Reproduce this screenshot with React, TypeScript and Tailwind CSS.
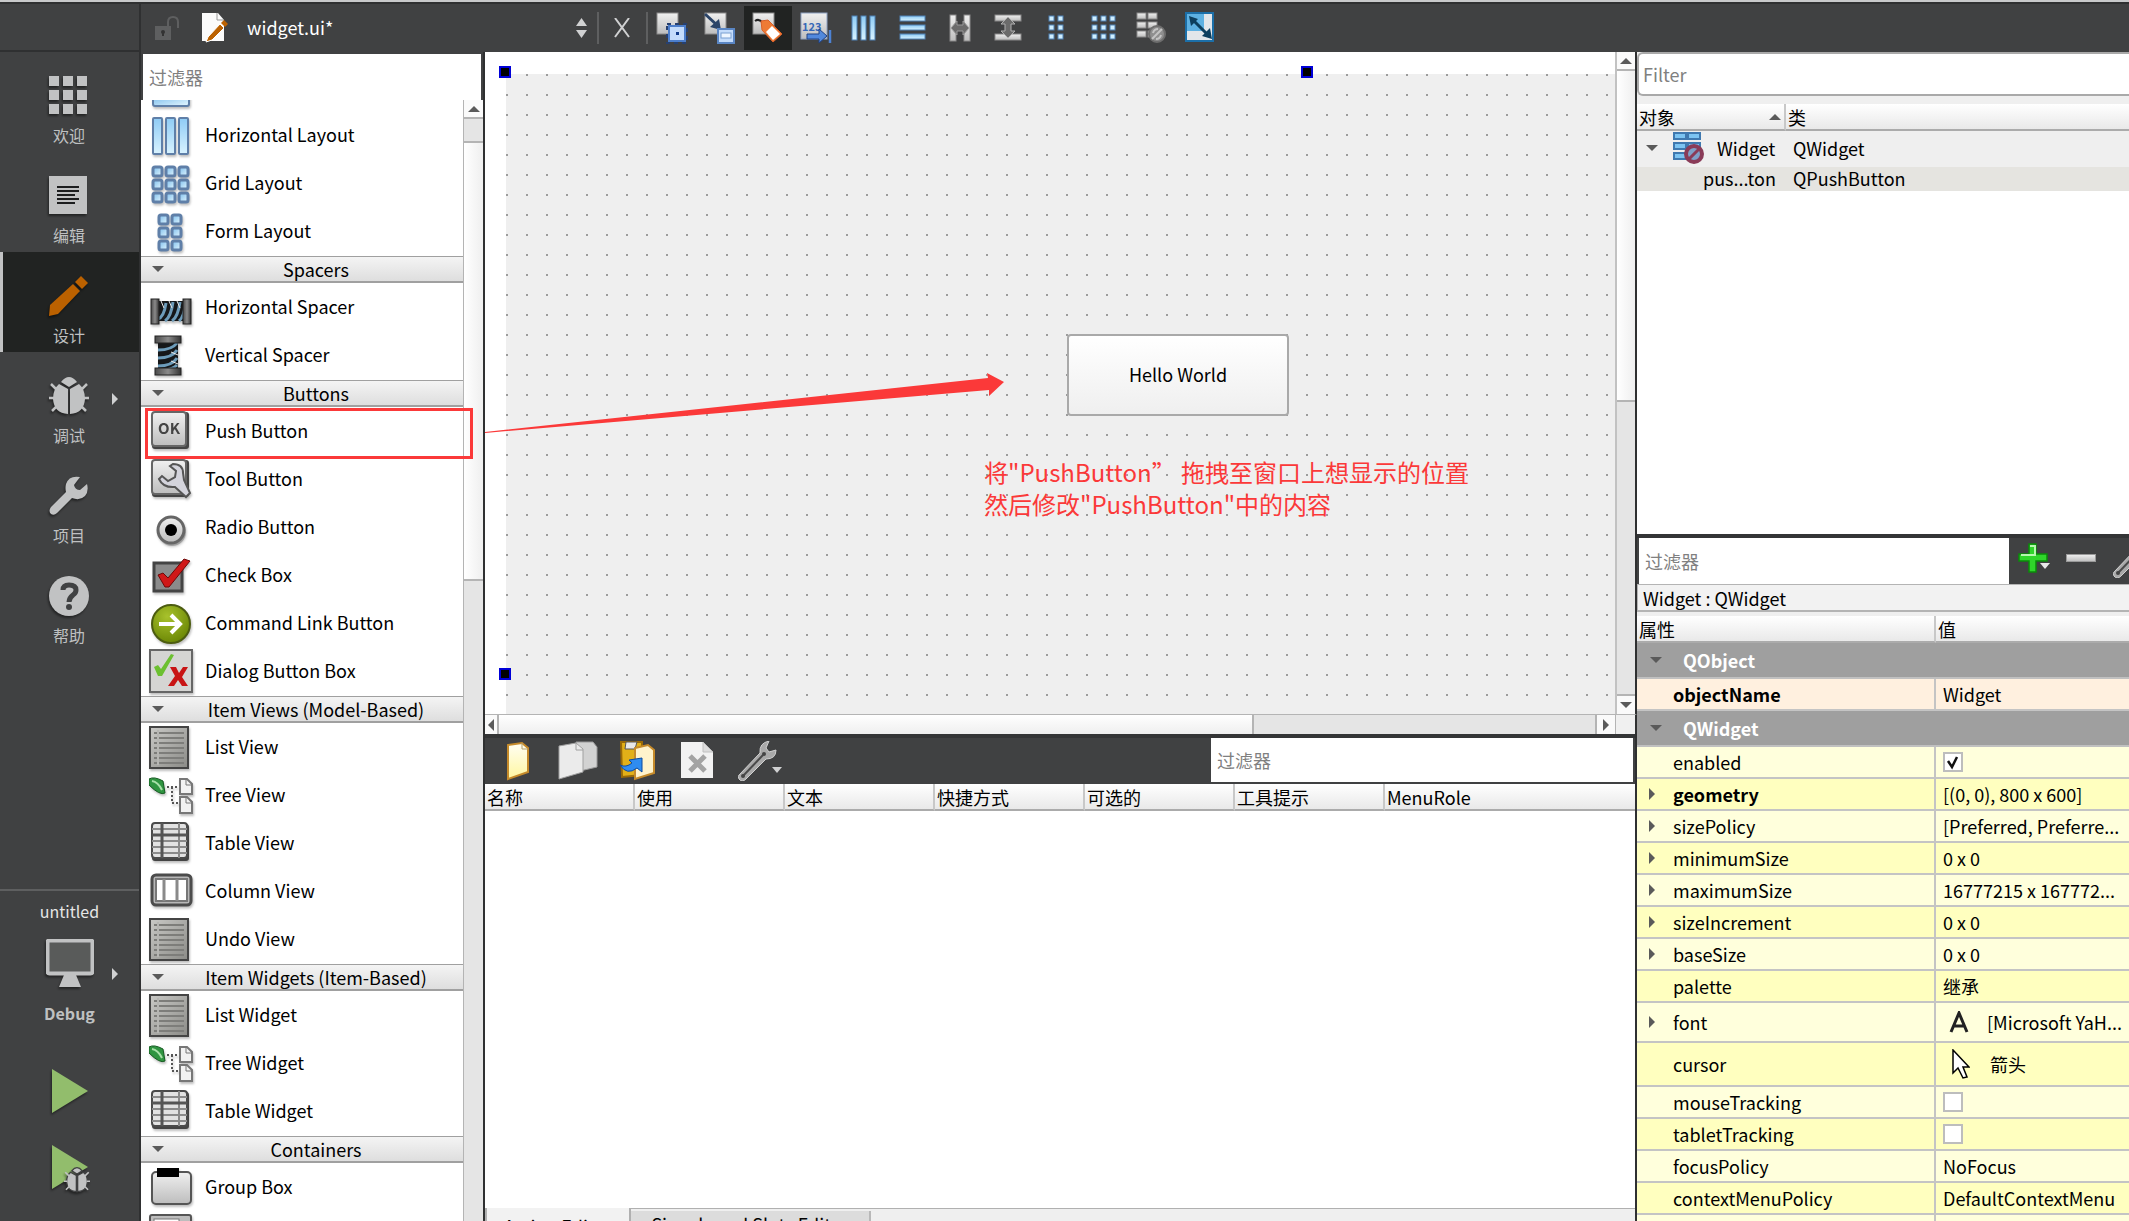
import { ReactNode } from "react";
import clsx from "clsx";

/* ---------- mode bar icons ---------- */

const shadow = "drop-shadow-[-1px_2px_1px_rgba(0,0,0,0.45)]";

const WelcomeIcon = () => (
    <svg width="38" height="38" viewBox="0 0 38 38" className={shadow}>
        {[0, 14, 28].map((y) => [0, 14, 28].map((x) => <rect key={`${x}-${y}`} x={x} y={y} width="10" height="10" fill="#c1c2c3" />))}
    </svg>
);

const EditIcon = () => (
    <svg width="38" height="38" viewBox="0 0 38 38" className={shadow}>
        <rect width="38" height="38" fill="#c1c2c3" />
        <path d="M8 11h22M8 15h22M8 19h18M8 23h22M8 27h18" stroke="#1c1d1e" strokeWidth="2" />
    </svg>
);

const DesignIcon = () => (
    <svg width="40" height="40" viewBox="0 0 40 40" className={shadow}>
        <path d="M0 40 1 29 24 8 31 15 9 38Z" fill="#bb6100" />
        <path d="M26 6 32 0 39 7 33 13Z" fill="#bb6100" />
    </svg>
);

const BugIcon = ({ size = 40, outline = false }: { size?: number; outline?: boolean }) => (
    <svg width={size} height={size} viewBox="0 0 40 40" className={shadow}>
        <g stroke={outline ? "#404142" : "none"} strokeWidth="2">
            <path d="M12 6Q20-4 28 6L20 11Z" fill="#c1c2c3" />
            <path d="M10 8 19 13V38Q5 37 4 23Q4 13 10 8ZM30 8 21 13V38Q35 37 36 23Q36 13 30 8Z" fill="#c1c2c3" />
        </g>
        <path d="M8 14 2 8M32 14 38 8M5 22H0M35 22H40M8 30 3 35M32 30 37 35" stroke="#c1c2c3" strokeWidth="2.5" fill="none" />
    </svg>
);

const ProjectIcon = () => (
    <svg width="40" height="40" viewBox="0 0 40 40" className={shadow}>
        <path d="M31 1Q20-1 17 8Q16 12 17 16L2 31Q-1 35 2 38Q5 40 8 37L23 22Q31 25 36 20Q40 15 38 8L31 14Q26 14 25 9Z" fill="#c1c2c3" />
    </svg>
);

const HelpIcon = () => (
    <svg width="40" height="40" viewBox="0 0 40 40" className={shadow}>
        <circle cx="20" cy="20" r="20" fill="#c1c2c3" />
        <path d="M14 14Q14 9 20 9Q27 9 27 14Q27 17 24 19Q20 22 20 26" stroke="#404142" strokeWidth="5" fill="none" />
        <circle cx="20" cy="31" r="3" fill="#404142" />
    </svg>
);

const modes = [
    { label: "欢迎", icon: <WelcomeIcon /> },
    { label: "编辑", icon: <EditIcon /> },
    { label: "设计", icon: <DesignIcon />, active: true },
    { label: "调试", icon: <BugIcon />, menu: true },
    { label: "项目", icon: <ProjectIcon /> },
    { label: "帮助", icon: <HelpIcon /> },
];

const Flyout = () => (
    <svg width="6" height="12" viewBox="0 0 6 12" className="absolute right-[21px] top-[41px]">
        <path d="M0 0 6 6 0 12Z" fill="#d0d1d2" />
    </svg>
);

const ModeBar = () => (
    <nav className="flex w-[141px] shrink-0 flex-col border-r-2 border-[#2f3031] bg-[#404142]">
        <div className="h-12 shrink-0 border-b-2 border-[#2f3031]" />
        {modes.map((m) => (
            <button
                key={m.label}
                className={clsx(
                    "relative flex h-[100px] shrink-0 flex-col items-center border-l-3 pr-1 pt-6 text-base leading-6",
                    m.active ? "border-[#c1c2c3] bg-[#212322]" : "border-transparent"
                )}
            >
                <span className="flex size-10 items-start">{m.icon}</span>
                <span className="mt-[7px] text-[#bfc0c1]">{m.label}</span>
                {m.menu && <Flyout />}
            </button>
        ))}
        <div className="mt-auto flex flex-col items-center border-t-2 border-[#5e5f60]">
            <button className="relative flex w-full flex-col items-center pt-2 text-base leading-6">
                <span className="text-[#e6e6e6]">untitled</span>
                <svg width="48" height="50" viewBox="0 0 48 50" className={clsx("mt-4 h-[50px]", shadow)}>
                    <rect x="1.5" y="1.5" width="45" height="33" rx="2" fill="#595b5a" stroke="#c1c2c3" strokeWidth="4" />
                    <path d="M18 36H30L35 48H13Z" fill="#c1c2c3" />
                </svg>
                <span className="mt-3 font-bold text-[#bfc0c1]">Debug</span>
                <svg width="6" height="12" viewBox="0 0 6 12" className="absolute right-[21px] top-[77px]">
                    <path d="M0 0 6 6 0 12Z" fill="#d0d1d2" />
                </svg>
            </button>
            <button aria-label="Run" className="mt-11">
                <svg width="36" height="44" viewBox="0 0 36 44" className={shadow}>
                    <path d="M0 0 36 22 0 44Z" fill="#92bd6c" />
                </svg>
            </button>
            <button aria-label="Start debugging" className="relative mb-8 mt-8">
                <svg width="36" height="44" viewBox="0 0 36 44" className={shadow}>
                    <path d="M0 0 36 22 0 44Z" fill="#92bd6c" />
                </svg>
                <span className="absolute left-3 top-[22px]"><BugIcon size={26} outline /></span>
            </button>
        </div>
    </nav>
);

/* ---------- top toolbar ---------- */

const Defs = () => (
    <svg width="0" height="0" className="absolute">
        <defs>
            <linearGradient id="sky" x1="0" y1="0" x2="0" y2="1">
                <stop offset="0" stopColor="#8ecbf5" />
                <stop offset="1" stopColor="#d9f3ff" />
            </linearGradient>
            <linearGradient id="cell" x1="0" y1="0" x2="1" y2="1">
                <stop offset="0" stopColor="#7cbdec" />
                <stop offset="1" stopColor="#e4f7ff" />
            </linearGradient>
            <linearGradient id="silver" x1="0" y1="0" x2="0" y2="1">
                <stop offset="0" stopColor="#f0f0f0" />
                <stop offset="1" stopColor="#bdbdbd" />
            </linearGradient>
            <linearGradient id="steel" x1="0" y1="0" x2="1" y2="0">
                <stop offset="0" stopColor="#4a4a4a" />
                <stop offset="0.5" stopColor="#8a8a8a" />
                <stop offset="1" stopColor="#333" />
            </linearGradient>
            <linearGradient id="sheet" x1="0" y1="0" x2="1" y2="1">
                <stop offset="0" stopColor="#c9c9c6" />
                <stop offset="1" stopColor="#8b8b87" />
            </linearGradient>
            <linearGradient id="paper" x1="0" y1="0" x2="0" y2="1">
                <stop offset="0" stopColor="#fffef4" />
                <stop offset="1" stopColor="#fff7a0" />
            </linearGradient>
            <radialGradient id="lime" cx="0.4" cy="0.3" r="0.8">
                <stop offset="0" stopColor="#a8c22c" />
                <stop offset="1" stopColor="#648000" />
            </radialGradient>
        </defs>
    </svg>
);

const ToolSvg = ({ children }: { children: ReactNode }) => (
    <svg width="32" height="32" viewBox="0 0 32 32">{children}</svg>
);

const tools: { name: string; icon: ReactNode; active?: boolean }[] = [
    {
        name: "Edit Widgets",
        icon: (
            <>
                <rect x="1" y="1" width="21" height="21" fill="url(#silver)" stroke="#8c8c8c" />
                <rect x="11" y="12" width="20" height="19" fill="none" stroke="#27406f" strokeWidth="2" strokeDasharray="4 4" />
                <rect x="13" y="14" width="16" height="15" fill="#c4dcfb" stroke="#4c7ecb" strokeWidth="2" />
                <rect x="20" y="20" width="3" height="3" fill="#123c8a" />
            </>
        ),
    },
    {
        name: "Edit Signals/Slots",
        icon: (
            <>
                <rect x="1" y="1" width="21" height="21" fill="url(#silver)" stroke="#8c8c8c" />
                <path d="M1 2 14 14" stroke="#2b4468" strokeWidth="3" />
                <path d="M17 18 6 15 15 7Z" fill="#2b4468" />
                <rect x="14" y="17" width="16" height="14" fill="#c4dcfb" stroke="#5a86c4" strokeWidth="2" />
                <rect x="17" y="21" width="10" height="5" fill="#eef6ff" stroke="#7ba0d2" />
            </>
        ),
    },
    {
        name: "Edit Buddies",
        active: true,
        icon: (
            <>
                <rect x="1" y="1" width="21" height="21" fill="url(#silver)" stroke="#8c8c8c" />
                <path d="M3 9Q7 6 11 11" stroke="#222" strokeWidth="2" fill="none" />
                <path d="M9 9 16 8 30 22 21 30 10 18Z" fill="#ee7a35" stroke="#d8602a" />
                <path d="M20 14 28 22 21 28 14 20Z" fill="#fff" />
            </>
        ),
    },
    {
        name: "Edit Tab Order",
        icon: (
            <>
                <rect x="1" y="1" width="26" height="26" fill="url(#silver)" stroke="#8fa3c4" />
                <text x="2" y="19" fontSize="11" fontWeight="700" fill="#3567b8">123</text>
                <path d="M7 22H19V17L27 24 19 31V27H7Z" fill="#5289dc" stroke="#1f4287" />
                <path d="M30 18V31" stroke="#4d82d4" strokeWidth="2.5" />
            </>
        ),
    },
    {
        name: "Lay Out Horizontally",
        icon: [4, 13, 22].map((x) => <rect key={x} x={x} y="4" width="5" height="24" fill="url(#sky)" stroke="#4f82b5" />),
    },
    {
        name: "Lay Out Vertically",
        icon: [4, 13, 22].map((y) => <rect key={y} x="4" y={y} width="25" height="5" fill="url(#sky)" stroke="#4f82b5" />),
    },
    {
        name: "Lay Out Horizontally in Splitter",
        icon: (
            <>
                <rect x="6" y="3" width="6" height="26" fill="url(#silver)" stroke="#8a8a8a" />
                <rect x="20" y="3" width="6" height="26" fill="url(#silver)" stroke="#8a8a8a" />
                <path d="M7 16 13 9V13H19V9L25 16 19 23V19H13V23Z" fill="#6b6b6b" stroke="#9a9a9a" />
            </>
        ),
    },
    {
        name: "Lay Out Vertically in Splitter",
        icon: (
            <>
                <rect x="3" y="3" width="26" height="6" fill="url(#silver)" stroke="#8a8a8a" />
                <rect x="3" y="22" width="26" height="6" fill="url(#silver)" stroke="#8a8a8a" />
                <path d="M16 5 23 12H19V19H23L16 26 9 19H13V12H9Z" fill="#6b6b6b" stroke="#b0b0b0" />
            </>
        ),
    },
    {
        name: "Lay Out in a Form",
        icon: [4, 13, 22].map((y) => [9, 18].map((x) => <rect key={`${x}${y}`} x={x} y={y} width="5" height="5" fill="#cfeeff" stroke="#4f82b5" />)),
    },
    {
        name: "Lay Out in a Grid",
        icon: [4, 13, 22].map((y) => [4, 13, 22].map((x) => <rect key={`${x}${y}`} x={x} y={y} width="5" height="5" fill="#cfeeff" stroke="#4f82b5" />)),
    },
    {
        name: "Break Layout",
        icon: (
            <>
                {[1, 10, 19].map((y) => [1, 12].map((x) => <rect key={`${x}${y}`} x={x} y={y} width="9" height="6" fill="url(#silver)" stroke="#8a8a8a" />))}
                <circle cx="21" cy="22" r="8" fill="#8f8f8f" stroke="#6e6e6e" strokeWidth="2" />
                <path d="M16 27 26 17M17 21Q18 17 22 17M25 23Q24 27 20 27" stroke="#c4c4c4" strokeWidth="2" fill="none" />
            </>
        ),
    },
    {
        name: "Adjust Size",
        icon: (
            <>
                <rect x="2" y="1" width="27" height="28" fill="#e2e6ea" stroke="#1c6fa8" strokeWidth="2" />
                <rect x="3" y="2" width="17" height="17" fill="#5eb1e2" />
                <path d="M8 7 24 23" stroke="#0d3f5e" strokeWidth="3" />
                <path d="M5 4 14 7 7 14ZM28 27 18 24 26 16Z" fill="#0d3f5e" />
            </>
        ),
    },
];

const TopBar = () => (
    <header className="flex h-12 shrink-0 items-center bg-[#404142]">
        <svg width="24" height="24" viewBox="0 0 24 24" className="ml-3.5">
            <rect y="10" width="16" height="14" fill="#5e5f60" />
            <path d="M13 11V6Q13 1 18 1Q23 1 23 6V12" stroke="#5e5f60" strokeWidth="2" fill="none" />
            <circle cx="8" cy="16" r="2" fill="#333" />
            <path d="M8 16V20" stroke="#333" strokeWidth="2" />
        </svg>
        <svg width="28" height="32" viewBox="0 0 28 32" className="ml-[22px]">
            <path d="M1 1H17L23 8V29H1Z" fill="#fbfbfb" />
            <path d="M16 1V8H23" stroke="#999" fill="none" />
            <path d="M5 30 7 25 19 12 23 16 11 28Z" fill="#bb6100" stroke="#fff" />
            <path d="M20 11 23 8 27 12 24 15Z" fill="#bb6100" />
        </svg>
        <button className="ml-[18px] flex w-[342px] items-center justify-between text-white">
            <span className="pb-0.5">widget.ui*</span>
            <svg width="15" height="20" viewBox="0 0 15 20">
                <path d="M7.5 0 13 8H2ZM7.5 20 13 12H2Z" fill="#d0d1d2" />
            </svg>
        </button>
        <span className="ml-2 h-8 w-0.5 shrink-0 bg-[#5e5f60]" />
        <button aria-label="Close" className="ml-[13px]">
            <svg width="20" height="20" viewBox="0 0 20 20">
                <path d="M3 0 17 19M17 0 3 19" stroke="#d0d1d2" strokeWidth="2" />
            </svg>
        </button>
        <span className="ml-3.5 h-8 w-0.5 shrink-0 bg-[#5e5f60]" />
        <div className="flex">
            {tools.map((t) => (
                <button
                    key={t.name}
                    aria-label={t.name}
                    className={clsx("flex h-11 w-12 items-center justify-center", t.active && "bg-[#212322]")}
                >
                    <ToolSvg>{t.icon}</ToolSvg>
                </button>
            ))}
        </div>
    </header>
);

/* ---------- widget box ---------- */

const boxIcons: Record<string, ReactNode> = {
    vertical: [4, 17, 31].map((y) => <rect key={y} x="4" y={y} width="36" height="10" rx="2" fill="url(#cell)" stroke="#5f7fa8" strokeWidth="2" />),
    horizontal: [4, 17, 30].map((x) => <rect key={x} x={x} y="5" width="9" height="36" rx="1" fill="url(#sky)" stroke="#5f7fa8" strokeWidth="2" />),
    grid: [6, 19, 32].map((y) => [4, 17, 30].map((x) => <rect key={`${x}${y}`} x={x} y={y} width="9" height="9" rx="2" fill="url(#cell)" stroke="#5f7fa8" strokeWidth="3" />)),
    form: [6, 19, 32].map((y) => [10, 23].map((x) => <rect key={`${x}${y}`} x={x} y={y} width="9" height="9" rx="2" fill="url(#cell)" stroke="#5f7fa8" strokeWidth="3" />)),
    hspacer: (
        <>
            <path d="M8 16H36V36H8Z" fill="#16181a" />
            <path d="M9 34Q15 32 17 18M16 36Q22 32 24 17M23 36Q29 32 31 17M30 36Q35 32 36 20" stroke="#6d9cba" strokeWidth="3" fill="none" />
            <path d="M12 16 15 23M20 16 23 23M28 16 31 23" stroke="#e8e8e8" strokeWidth="1" />
            <rect x="2" y="14" width="8" height="25" fill="url(#steel)" stroke="#222" />
            <rect x="34" y="14" width="8" height="25" fill="url(#steel)" stroke="#222" />
        </>
    ),
    vspacer: (
        <>
            <path d="M9 9H29V36H9Z" fill="#16181a" />
            <path d="M9 17Q23 17 28 10M9 25Q23 25 28 17M9 33Q23 33 28 25M15 37Q24 36 28 32" stroke="#6d9cba" strokeWidth="3" fill="none" />
            <path d="M22 19 29 22M22 28 29 31" stroke="#e8e8e8" strokeWidth="1" />
            <rect x="6" y="3" width="26" height="7" fill="url(#steel)" stroke="#222" />
            <rect x="6" y="35" width="26" height="7" fill="url(#steel)" stroke="#222" />
        </>
    ),
    push: (
        <>
            <rect x="3" y="3" width="37" height="37" rx="3" fill="#444" />
            <rect x="3" y="3" width="34" height="34" rx="3" fill="url(#silver)" stroke="#666" strokeWidth="2" />
            <text x="20" y="25" textAnchor="middle" fontSize="15" fontWeight="700" fill="#444">OK</text>
        </>
    ),
    tool: (
        <>
            <rect x="3" y="3" width="37" height="37" rx="3" fill="#444" />
            <rect x="3" y="3" width="34" height="34" rx="3" fill="url(#silver)" stroke="#666" strokeWidth="2" />
            <path d="M24 7Q34 7 34 16L35 23 41 36 37 40 26 30Q14 31 10 22L13 19 19 24 26 20 27 14 21 9Z" fill="#d4d4dc" stroke="#555" strokeWidth="2" />
        </>
    ),
    radio: (
        <>
            <circle cx="23" cy="27" r="14" fill="#00000033" />
            <circle cx="22" cy="25" r="13" fill="url(#silver)" stroke="#666" strokeWidth="3" />
            <circle cx="22" cy="25" r="6" fill="#000" />
        </>
    ),
    check: (
        <>
            <rect x="5" y="10" width="28" height="28" fill="#8b8b8b" stroke="#444" strokeWidth="3" />
            <path d="M9 22 14 20 19 25 35 6 41 8 20 34 16 34Z" fill="#d01818" stroke="#6e0808" />
        </>
    ),
    command: (
        <>
            <circle cx="22" cy="23" r="19" fill="url(#lime)" stroke="#4c5c10" strokeWidth="2" />
            <path d="M10 23H31M22 14 31 23 22 32" stroke="#fff" strokeWidth="4" fill="none" />
        </>
    ),
    dialog: (
        <>
            <rect x="1" y="1" width="42" height="42" fill="#d5d5d3" stroke="#666" strokeWidth="2" />
            <path d="M5 18 9 16 12 20 22 5 25 6 13 27 9 27Z" fill="#6cc030" />
            <path d="M21 18H27L30 24 34 18H39L33 28 39 37H33L29 31 25 37H19L26 27Z" fill="#c81414" />
        </>
    ),
    list: (
        <>
            <rect x="1" y="2" width="38" height="41" fill="url(#sheet)" stroke="#444" strokeWidth="2" />
            <path d="M5 8H35M5 13H35M5 18H35M5 23H35M5 28H35M5 33H35M5 38H35" stroke="#7d7d7a" strokeWidth="2" />
            <path d="M9 5V40" stroke="#b5b5b2" strokeWidth="2" />
        </>
    ),
    tree: (
        <>
            <path d="M0 6Q5 3 14 8L16 20Q11 23 0 12Z" fill="#2f9440" stroke="#145a20" />
            <path d="M3 8Q9 9 13 17" stroke="#a8e0a8" strokeWidth="2" fill="none" />
            <path d="M18 14H29M23 14V30M23 30H29" stroke="#555" strokeWidth="2" strokeDasharray="2 2" fill="none" />
            <path d="M31 6H38L43 11V21H31ZM31 24H38L43 29V40H31Z" fill="#f2f2f2" stroke="#777" strokeWidth="2" />
            <path d="M37 6V12H43M37 24V30H43" stroke="#777" fill="none" />
        </>
    ),
    table: (
        <>
            <rect x="3" y="3" width="37" height="37" rx="3" fill="#444" />
            <rect x="3" y="2" width="35" height="35" rx="3" fill="#e2e2e2" stroke="#4a4a4a" strokeWidth="2" />
            <path d="M3 8H38M3 20H38M3 26H38M3 32H38M30 2V37" stroke="#8a8a8a" strokeWidth="2" />
            <path d="M3 14H38M13 2V37" stroke="#555" strokeWidth="3" />
        </>
    ),
    column: (
        <>
            <rect x="3" y="6" width="39" height="30" rx="4" fill="#b8b8b8" stroke="#4c4c4c" strokeWidth="3" />
            <rect x="7" y="10" width="31" height="22" fill="#fff" stroke="#777" strokeWidth="2" />
            <path d="M15 10V32M28 10V32" stroke="#8a8a8a" strokeWidth="3" />
        </>
    ),
    group: (
        <>
            <rect x="3" y="7" width="39" height="32" rx="4" fill="url(#silver)" stroke="#555" strokeWidth="2" />
            <rect x="8" y="3" width="22" height="9" fill="#000" />
        </>
    ),
    scroll: (
        <>
            <rect x="1" y="2" width="41" height="40" rx="2" fill="#bdbdbd" stroke="#555" strokeWidth="2" />
            <rect x="5" y="6" width="25" height="30" fill="#fff" stroke="#777" />
        </>
    ),
};

const BoxIcon = ({ name }: { name: string }) => (
    <svg width="44" height="44" viewBox="0 0 44 44" className="shrink-0 drop-shadow-[1px_2px_1px_rgba(0,0,0,0.25)]">{boxIcons[name]}</svg>
);

const groups = [
    { title: "", items: [["Horizontal Layout", "horizontal"], ["Grid Layout", "grid"], ["Form Layout", "form"]] },
    { title: "Spacers", items: [["Horizontal Spacer", "hspacer"], ["Vertical Spacer", "vspacer"]] },
    {
        title: "Buttons",
        items: [
            ["Push Button", "push"],
            ["Tool Button", "tool"],
            ["Radio Button", "radio"],
            ["Check Box", "check"],
            ["Command Link Button", "command"],
            ["Dialog Button Box", "dialog"],
        ],
    },
    {
        title: "Item Views (Model-Based)",
        items: [
            ["List View", "list"],
            ["Tree View", "tree"],
            ["Table View", "table"],
            ["Column View", "column"],
            ["Undo View", "list"],
        ],
    },
    { title: "Item Widgets (Item-Based)", items: [["List Widget", "list"], ["Tree Widget", "tree"], ["Table Widget", "table"]] },
    { title: "Containers", items: [["Group Box", "group"]] },
];

const Triangle = ({ dir, className = "" }: { dir: "up" | "down" | "left" | "right"; className?: string }) => {
    const d = { up: "M0 9 6 3 12 9Z", down: "M0 3 6 9 12 3Z", left: "M9 0 3 6 9 12Z", right: "M3 0 9 6 3 12Z" }[dir];
    return (
        <svg width="12" height="12" viewBox="0 0 12 12" className={clsx("shrink-0", className)}>
            <path d={d} fill="#5a5a5a" />
        </svg>
    );
};

const WidgetBox = () => (
    <aside className="flex w-[344px] shrink-0 flex-col border-r-2 border-[#2f3031]">
        <div className="h-12 shrink-0 border-x-2 border-t-2 border-[#404142] bg-white">
            <input aria-label="过滤器" placeholder="过滤器" className="h-full w-full px-1.5 outline-none placeholder:text-[#808080]" />
        </div>
        <div className="flex min-h-0 flex-1 overflow-hidden bg-white">
            <div className="w-[322px] shrink-0">
                <div className="flex h-[11px] items-end overflow-hidden pb-0.5 pl-2">
                    <BoxIcon name="vertical" />
                </div>
                {groups.map((g) => (
                    <section key={g.title}>
                        {g.title && (
                            <button className="mt-px flex h-[27px] w-full items-center border-b-2 border-t border-[#a0a0a0] bg-linear-to-b from-[#f4f4f4] to-[#dedede] pl-[11px]">
                                <Triangle dir="down" className="mr-[5px]" />
                                <span className="flex-1 text-center">{g.title}</span>
                            </button>
                        )}
                        {g.items.map(([label, icon]) => (
                            <button key={label} className="relative flex h-12 w-full items-center gap-3 pl-2 text-left">
                                <BoxIcon name={icon} />
                                <span className="pb-0.5">{label}</span>
                                {label === "Push Button" && (
                                    <span className="absolute left-1 top-px z-10 h-[51px] w-[328px] border-3 border-[#fb3939]" />
                                )}
                            </button>
                        ))}
                    </section>
                ))}
                <div className="h-12 pl-2 pt-0.5">
                    <BoxIcon name="scroll" />
                </div>
            </div>
            <div className="flex flex-1 flex-col border-l border-[#b4b4b4] bg-[#e5e5e5]">
                <div className="flex h-[19px] shrink-0 items-center justify-center border-b-2 border-[#b4b4b4] bg-[#fafafa]"><Triangle dir="up" /></div>
                <div className="h-6 shrink-0 border-b-2 border-[#b4b4b4]" />
                <div className="h-[438px] shrink-0 border-b-2 border-[#b4b4b4] bg-linear-to-r from-white to-[#efefef]" />
            </div>
        </div>
    </aside>
);

/* ---------- form canvas ---------- */

const Handle = ({ className }: { className: string }) => (
    <span className={clsx("absolute size-3 border-2 border-[#0000d8] bg-black", className)} />
);

const FormCanvas = () => (
    <section className="flex min-h-0 flex-[682] flex-col">
        <div className="flex min-h-0 flex-1">
            <div className="relative min-w-0 flex-1 overflow-hidden bg-white pl-[21px] pt-[22px]">
                <div className="h-full bg-[#efefef] bg-[conic-gradient(at_2px_2px,transparent_75%,#9c9c9c_0)] bg-[length:20px_20px]" />
                <Handle className="left-3.5 top-3.5" />
                <Handle className="left-[816px] top-3.5" />
                <Handle className="left-3.5 top-[616px]" />
                <button className="absolute left-[582px] top-[282px] h-[82px] w-[222px] rounded border-2 border-[#a9a9a9] bg-linear-to-b from-white to-[#efefef] pb-0.5">
                    Hello World
                </button>
                <svg width="520" height="72" viewBox="0 0 520 72" className="absolute left-0 top-[316px]">
                    <path d="M0 64 503 10 502 5 519 14 504 28 504 22 0 65Z" fill="#fb3939" />
                </svg>
                <p className="absolute left-[499px] top-[404px] whitespace-nowrap text-2xl leading-8 text-[#fb3939]">
                    将"PushButton” 拖拽至窗口上想显示的位置
                    <br />
                    然后修改"PushButton"中的内容
                </p>
            </div>
            <div className="flex w-5 shrink-0 flex-col border-l-2 border-[#c2c2c2] bg-[#e5e5e5]">
                <div className="flex h-[19px] items-center justify-center border-b-2 border-[#b4b4b4] bg-[#fafafa]"><Triangle dir="up" /></div>
                <div className="h-[331px] border-b-2 border-[#b4b4b4] bg-linear-to-r from-white to-[#efefef]" />
                <div className="mt-auto flex h-5 items-center justify-center border-t-2 border-[#b4b4b4] bg-[#fafafa]"><Triangle dir="down" /></div>
            </div>
            <div className="w-0.5 bg-[#2f3031]" />
        </div>
        <div className="flex h-5 shrink-0 border-r-2 border-t border-r-[#2f3031] border-t-[#b4b4b4] bg-[#e5e5e5]">
            <div className="flex w-3.5 items-center justify-center border-r-2 border-[#b4b4b4] bg-[#fafafa]"><Triangle dir="left" /></div>
            <div className="w-[755px] border-r-2 border-[#b4b4b4] bg-linear-to-b from-white to-[#efefef]" />
            <div className="ml-auto flex w-5 items-center justify-center border-l-2 border-[#b4b4b4] bg-[#fafafa]"><Triangle dir="right" /></div>
            <div className="w-5 border-l border-[#b4b4b4] bg-[#f0f0f0]" />
        </div>
    </section>
);

/* ---------- action editor ---------- */

const Wrench = () => (
    <>
        <path d="M1 38Q-1 35 2 33L22 12Q21 2 31 0L28 7 31 11 38 9Q38 18 28 18L8 38Q4 42 1 38Z" fill="#a9a9a9" stroke="#d0d0d0" />
        <path d="M5 35 25 14" stroke="#4a4a4a" strokeWidth="2" />
        <circle cx="26" cy="13" r="2" fill="#444" />
        <circle cx="5" cy="35" r="2" fill="#444" />
    </>
);

const actionTools = [
    {
        name: "New",
        icon: (
            <>
                <path d="M10 4 24 2 30 7V31L10 38Z" fill="url(#paper)" stroke="#c58a2a" strokeWidth="2" />
                <path d="M24 2V8H30" stroke="#b0a070" fill="none" />
            </>
        ),
    },
    {
        name: "Copy",
        icon: (
            <>
                <path d="M18 1 35 1 39 6V26L22 30Z" fill="#d2d2d2" stroke="#9a9a9a" />
                <path d="M1 5 18 2 25 8V31L1 38Z" fill="#ebebeb" stroke="#a0a0a0" />
                <path d="M18 2V9L25 9" stroke="#a0a0a0" fill="none" />
            </>
        ),
    },
    {
        name: "Paste",
        icon: (
            <>
                <path d="M3 1H24V34L4 36Z" fill="#e2b018" stroke="#9a6a08" strokeWidth="2" />
                <path d="M8 1H19L17 8H7Z" fill="#e8e8e8" stroke="#555" />
                <path d="M17 7 30 4 36 9V32L17 38Z" fill="#fff3cc" stroke="#c58a2a" strokeWidth="2" />
                <path d="M2 24Q8 27 14 22L11 19 24 17V31L19 27Q9 35 2 24Z" fill="#2f8cf0" stroke="#0d4aa0" />
            </>
        ),
    },
    {
        name: "Delete",
        icon: (
            <>
                <path d="M3 1H25L35 11V37H3Z" fill="#f2f2f2" />
                <path d="M25 1V11H35" stroke="#c0c0c0" fill="#dcdcdc" />
                <path d="M12 15 27 30M27 15 12 30" stroke="#a3a3a3" strokeWidth="5" />
            </>
        ),
    },
    { name: "Configure", icon: <Wrench /> },
];

const ActionEditor = () => (
    <section className="flex min-h-0 flex-[487] flex-col border-r-2 border-[#2f3031] bg-white">
        <div className="flex h-[50px] shrink-0 border-t-4 border-[#343536] bg-[#404142] pr-0.5">
            <div className="flex items-center gap-5 pl-[13px]">
                {actionTools.map((t) => (
                    <button key={t.name} aria-label={t.name} className="relative flex size-10 items-center">
                        <svg width="40" height="40" viewBox="0 0 40 40">{t.icon}</svg>
                        {t.name === "Configure" && (
                            <svg width="10" height="6" viewBox="0 0 10 6" className="absolute -right-1 bottom-2"><path d="M0 0H10L5 6Z" fill="#d0d1d2" /></svg>
                        )}
                    </button>
                ))}
            </div>
            <input aria-label="过滤器" placeholder="过滤器" className="mb-0.5 ml-auto w-[422px] bg-white px-1.5 outline-none placeholder:text-[#808080]" />
        </div>
        <table className="w-full table-fixed border-separate border-spacing-0">
            <thead>
                <tr className="h-[27px]">
                    {["名称", "使用", "文本", "快捷方式", "可选的", "工具提示", "MenuRole"].map((h, i) => (
                        <th
                            key={h}
                            className={clsx(
                                "border-b-2 border-[#ababab] bg-linear-to-b from-white to-[#e9e9e9] p-0 pl-0.5 text-left font-normal",
                                i < 6 && "w-[150px] border-r-2 border-r-[#c8c8c8]"
                            )}
                        >
                            {h}
                        </th>
                    ))}
                </tr>
            </thead>
        </table>
        <div className="mt-auto flex h-[13px] shrink-0 overflow-hidden bg-[#efefef]">
            <button className="flex h-9 w-[146px] shrink-0 items-start justify-center border-x-2 border-[#b0b0b0] bg-[#f2f2f2] pt-1.5">Action Editor</button>
            <div className="flex flex-1 border-t border-[#b0b0b0] pt-0.5">
                <button className="flex h-9 w-60 items-start justify-center border-r-2 border-[#b8b8b8] bg-[#dcdcdc] pt-px">Signals and Slots Editor</button>
            </div>
        </div>
    </section>
);

/* ---------- object inspector ---------- */

const headCell = "border-b-2 border-[#ababab] bg-linear-to-b from-white to-[#e9e9e9] p-0 pl-0.5 text-left font-normal";

const ObjectInspector = () => (
    <section className="flex min-h-0 flex-[482] flex-col bg-white">
        <div className="shrink-0 bg-[#efefef] pb-2">
            <input
                aria-label="Filter"
                placeholder="Filter"
                className="block h-11 w-full rounded-l-md border-2 border-r-0 border-[#a9a9a9] bg-white pl-1 outline-none placeholder:text-[#808080]"
            />
        </div>
        <table className="w-full table-fixed border-separate border-spacing-0 whitespace-nowrap">
            <thead>
                <tr className="h-[27px]">
                    <th className={clsx(headCell, "w-[149px] border-r-2 border-r-[#c8c8c8]")}>
                        <span className="flex items-center justify-between pr-[3px]">对象<Triangle dir="up" /></span>
                    </th>
                    <th className={headCell}>类</th>
                </tr>
            </thead>
            <tbody>
                <tr className="h-9 bg-[#efefef]">
                    <td className="p-0 pb-0.5 pl-[9px]">
                        <span className="flex items-center">
                            <Triangle dir="down" />
                            <svg width="32" height="32" viewBox="0 0 32 32" className="ml-[15px] mr-3 shrink-0">
                                {[1, 11, 21].map((y) => [1, 15].map((x) => <rect key={`${x}${y}`} x={x} y={y} width="12" height="6" fill="#7cc4f2" stroke="#3f79b0" strokeWidth="2" />))}
                                <circle cx="21" cy="22" r="8" fill="#7fa0c8" stroke="#8a3b58" strokeWidth="4" />
                                <path d="M15 28 27 16" stroke="#8a3b58" strokeWidth="3" />
                            </svg>
                            Widget
                        </span>
                    </td>
                    <td className="p-0 pb-0.5 pl-[7px]">QWidget</td>
                </tr>
                <tr className="h-6 bg-[#e5e4e0] leading-[22px]">
                    <td className="p-0 pb-0.5 pl-[66px]">pus...ton</td>
                    <td className="p-0 pb-0.5 pl-[7px]">QPushButton</td>
                </tr>
            </tbody>
        </table>
    </section>
);

/* ---------- property editor ---------- */

interface Property {
    name: string;
    value?: string;
    kind?: "group" | "check" | "font" | "cursor";
    expand?: boolean;
    bold?: boolean;
    checked?: boolean;
    bg?: string;
    height?: string;
}

const light = "bg-[#ffffdc]";
const dark = "bg-[#ffffbf]";

const properties: Property[] = [
    { name: "QObject", kind: "group", height: "h-9" },
    { name: "objectName", value: "Widget", bold: true, bg: "bg-[#fff0df]" },
    { name: "QWidget", kind: "group", height: "h-9" },
    { name: "enabled", kind: "check", checked: true, bg: light },
    { name: "geometry", value: "[(0, 0), 800 x 600]", expand: true, bold: true, bg: dark },
    { name: "sizePolicy", value: "[Preferred, Preferre...", expand: true, bg: light },
    { name: "minimumSize", value: "0 x 0", expand: true, bg: dark },
    { name: "maximumSize", value: "16777215 x 167772...", expand: true, bg: light },
    { name: "sizeIncrement", value: "0 x 0", expand: true, bg: dark },
    { name: "baseSize", value: "0 x 0", expand: true, bg: light },
    { name: "palette", value: "继承", bg: dark },
    { name: "font", value: "[Microsoft YaH...", kind: "font", expand: true, bg: light, height: "h-10" },
    { name: "cursor", value: "箭头", kind: "cursor", bg: dark, height: "h-11" },
    { name: "mouseTracking", kind: "check", bg: light },
    { name: "tabletTracking", kind: "check", bg: dark },
    { name: "focusPolicy", value: "NoFocus", bg: light },
    { name: "contextMenuPolicy", value: "DefaultContextMenu", bg: dark },
    { name: "", bg: light },
];

const PropertyValue = ({ p }: { p: Property }) => {
    if (p.kind === "check") {
        return (
            <span className="grid size-5">
                <input type="checkbox" aria-label={p.name} defaultChecked={p.checked} className="col-start-1 row-start-1 size-5 appearance-none border-2 border-[#bdbdbd] bg-white" />
                {p.checked && (
                    <svg viewBox="0 0 20 20" className="pointer-events-none col-start-1 row-start-1 size-5">
                        <path d="M5 9 9 15 14 5" stroke="#111" strokeWidth="2.5" fill="none" />
                    </svg>
                )}
            </span>
        );
    }
    return (
        <span className="flex items-center">
            {p.kind === "font" && (
                <svg width="20" height="22" viewBox="0 0 20 22" className="ml-1.5 mr-[18px]">
                    <path d="M2 21 10 2 18 21M5 15H15" stroke="#222" strokeWidth="3" fill="none" />
                </svg>
            )}
            {p.kind === "cursor" && (
                <svg width="18" height="30" viewBox="0 0 18 30" className="ml-[9px] mr-5">
                    <path d="M1 1V24L6 19 11 29 15 28 11 18H17Z" fill="#fff" stroke="#000" strokeWidth="1.5" />
                </svg>
            )}
            {p.value}
        </span>
    );
};

const PropertyEditor = () => (
    <section className="flex min-h-0 flex-[683] flex-col overflow-hidden border-t-4 border-[#343536] bg-[#efefef]">
        <div className="flex h-[46px] shrink-0 items-center overflow-hidden bg-[#404142] pl-0.5">
            <input aria-label="过滤器" placeholder="过滤器" className="h-full min-w-0 flex-1 bg-white px-1.5 outline-none placeholder:text-[#808080]" />
            <div className="flex w-[120px] shrink-0 items-center overflow-hidden pb-1.5 pl-[9px]">
                <button aria-label="Add property" className="relative shrink-0">
                    <svg width="30" height="30" viewBox="0 0 30 30">
                        <path d="M11 1H18V11H29V18H18V29H11V18H1V11H11Z" fill="#2fd52a" stroke="#0a8a0a" strokeWidth="1.5" />
                        <path d="M12 3H17V12H3" stroke="#b6f7ae" strokeWidth="2" fill="none" />
                    </svg>
                    <svg width="10" height="6" viewBox="0 0 10 6" className="absolute -right-0.5 bottom-1"><path d="M0 0H10L5 6Z" fill="#e8e8e8" /></svg>
                </button>
                <button aria-label="Remove property" className="ml-[18px] shrink-0">
                    <svg width="30" height="8" viewBox="0 0 30 8"><rect x="0.5" y="0.5" width="29" height="7" fill="url(#silver)" stroke="#999" /></svg>
                </button>
                <button aria-label="Configure" className="ml-[17px] shrink-0">
                    <svg width="40" height="40" viewBox="0 0 40 40" className="-my-3"><Wrench /></svg>
                </button>
            </div>
        </div>
        <div className="h-7 shrink-0 border-b-2 border-l border-t border-[#b4b4b4] bg-[#f2f2f2] pl-[5px] pt-px">Widget : QWidget</div>
        <table className="mt-1 w-full table-fixed border-separate border-spacing-0 whitespace-nowrap">
            <thead>
                <tr className="h-[27px]">
                    <th className={clsx(headCell, "w-[299px] border-r-2 border-r-[#c8c8c8]")}>属性</th>
                    <th className={headCell}>值</th>
                </tr>
            </thead>
            <tbody>
                {properties.map((p) =>
                    p.kind === "group" ? (
                        <tr key={p.name} className={clsx("bg-[#9f9f9f] text-white", p.height)}>
                            <th colSpan={2} className="border-b-2 border-[#c0c0c0] p-0 pl-[13px] text-left font-bold">
                                <span className="flex items-center gap-[21px]"><Triangle dir="down" />{p.name}</span>
                            </th>
                        </tr>
                    ) : (
                        <tr key={p.name} className={clsx(p.bg, p.height ?? "h-8")}>
                            <td className={clsx("border-b-2 border-r-2 border-[#c4c4c4] p-0 pl-[9px]", p.bold && "font-bold")}>
                                <span className="flex items-center gap-[15px]">
                                    {p.expand ? <Triangle dir="right" /> : <span className="w-3" />}
                                    {p.name}
                                </span>
                            </td>
                            <td className="overflow-hidden border-b-2 border-[#c4c4c4] p-0 pl-[7px]"><PropertyValue p={p} /></td>
                        </tr>
                    )
                )}
            </tbody>
        </table>
    </section>
);

export default function App() {
    return (
        <div className="flex h-screen w-full flex-col overflow-hidden bg-[#404142] font-['Noto_Sans_CJK_SC',sans-serif] text-[18px] leading-6 text-black">
            <Defs />
            <div className="h-1 shrink-0 border-b-2 border-t-2 border-b-[#2f3031] border-t-[#c8c9ca]" />
            <div className="flex min-h-0 flex-1">
                <ModeBar />
                <div className="flex min-w-0 flex-1 flex-col">
                    <TopBar />
                    <div className="flex min-h-0 flex-1">
                        <WidgetBox />
                        <main className="flex min-w-0 flex-1 flex-col">
                            <FormCanvas />
                            <ActionEditor />
                        </main>
                        <aside className="flex w-[492px] shrink-0 flex-col">
                            <ObjectInspector />
                            <PropertyEditor />
                        </aside>
                    </div>
                </div>
            </div>
        </div>
    );
}
